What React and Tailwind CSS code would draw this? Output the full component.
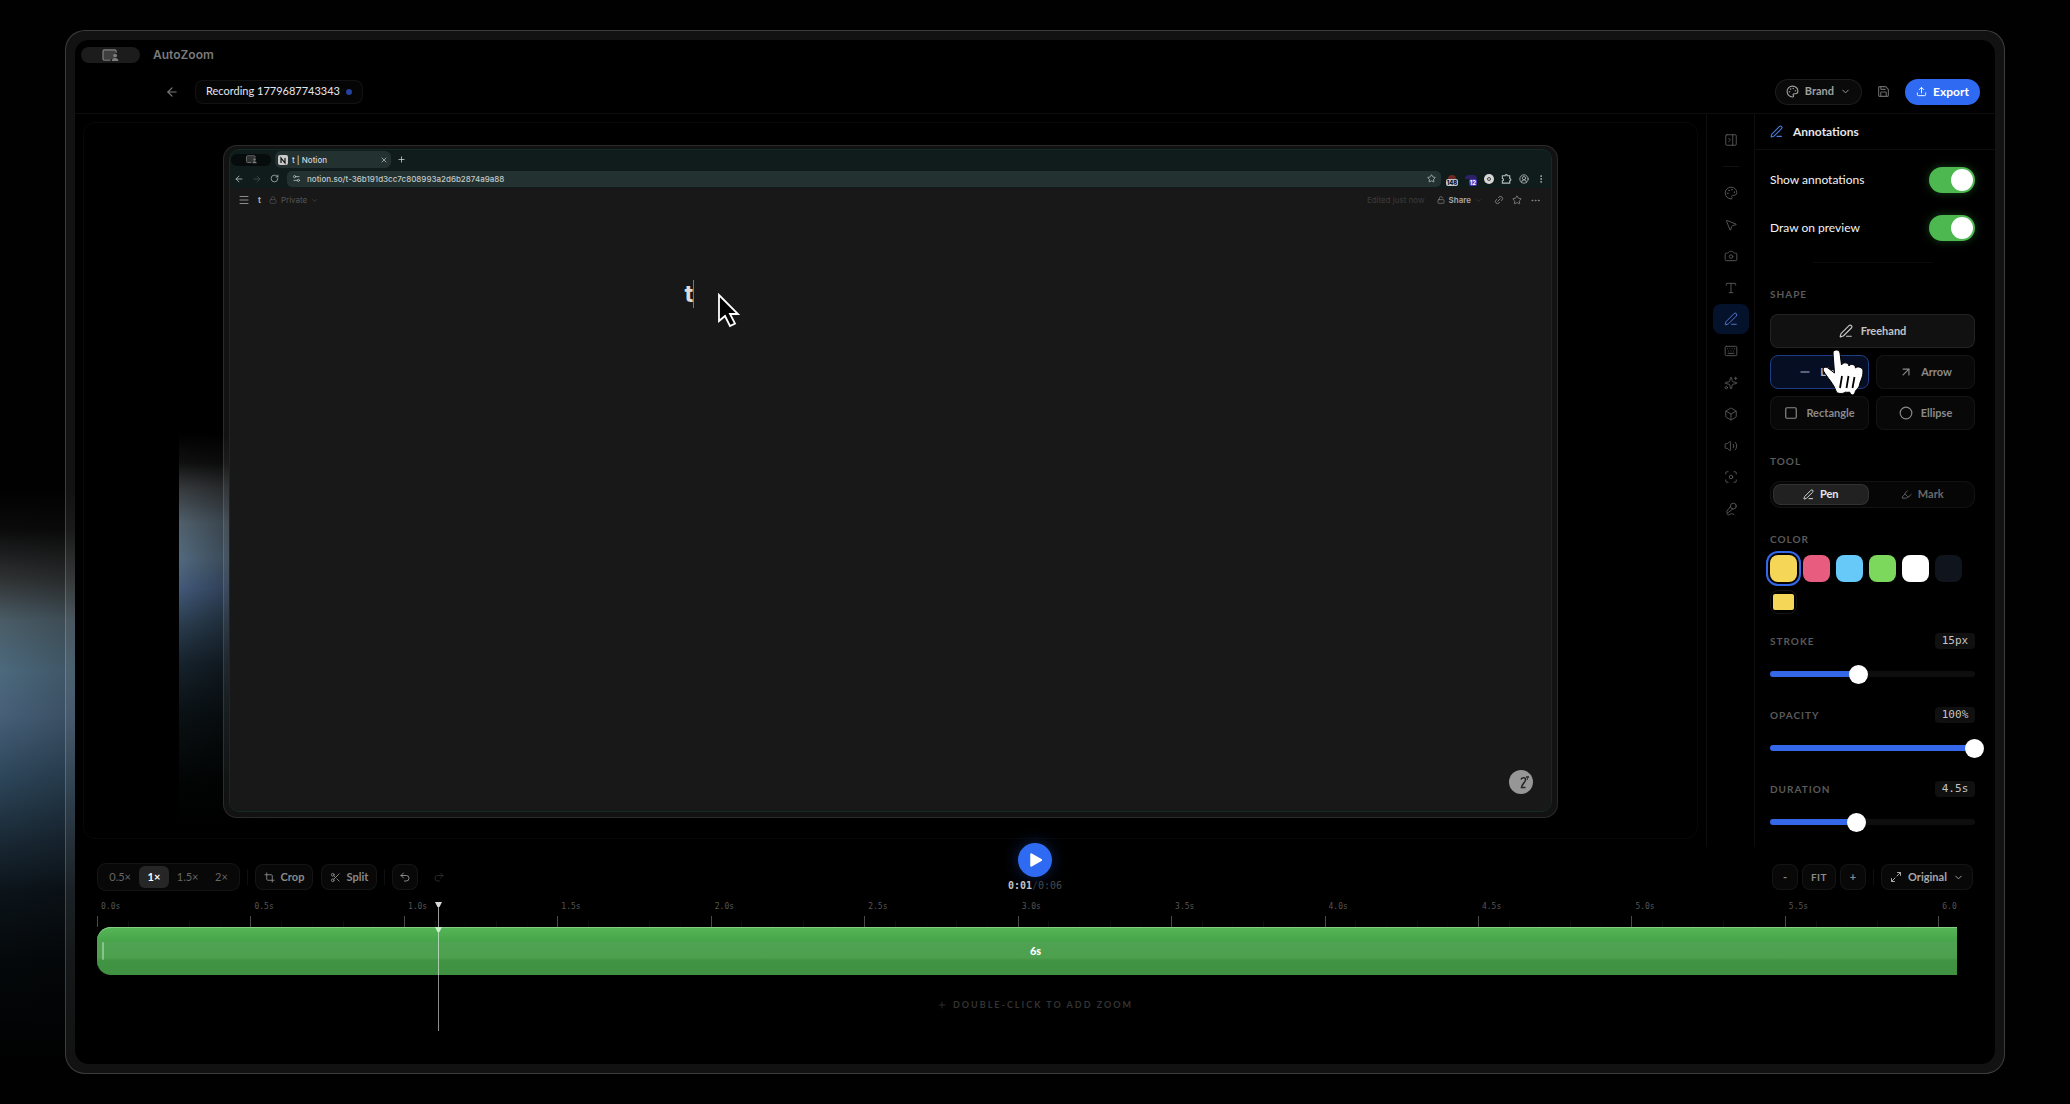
import React, { useState } from 'react';
import {
    ArrowLeft, ArrowRight, ArrowUpRight, Box, Camera, ChevronDown, Circle, CircleUserRound, Crop,
    EllipsisVertical, Ellipsis, Focus, Highlighter, Keyboard, Link2, Lock, LockOpen, Maximize2, Menu,
    MicVocal, Minus, MousePointer2, Palette, PanelRightClose, PenLine, Plus, Redo2, RotateCw,
    Save, Scissors, Settings2, Sparkles, Square, Star, Type, Undo2, Upload, Volume2, X,
} from 'lucide-react';

const railItems = [
    { id: 'style', label: 'Style', icon: Palette },
    { id: 'cursor', label: 'Cursor', icon: MousePointer2 },
    { id: 'camera', label: 'Camera', icon: Camera },
    { id: 'text', label: 'Text', icon: Type },
    { id: 'annotations', label: 'Annotations', icon: PenLine },
    { id: 'keyboard', label: 'Keyboard', icon: Keyboard },
    { id: 'effects', label: 'Effects', icon: Sparkles },
    { id: '3d', label: '3D', icon: Box },
    { id: 'audio', label: 'Audio', icon: Volume2 },
    { id: 'focus', label: 'Focus', icon: Focus },
    { id: 'voice', label: 'Voice', icon: MicVocal },
];

const colors = [
    { name: 'Yellow', className: 'bg-[#f5d657]' },
    { name: 'Pink', className: 'bg-[#e85d7f]' },
    { name: 'Blue', className: 'bg-[#66c9f7]' },
    { name: 'Green', className: 'bg-[#7bd85c]' },
    { name: 'White', className: 'bg-white' },
    { name: 'Black', className: 'bg-[#10151d]' },
];

const speeds = ['0.5×', '1×', '1.5×', '2×'];

// Half second marks, 0.0s to 6.0s
const marks = Array.from({ length: 13 }, (_, i) => (i * 0.5).toFixed(1));

const ScreenShareIcon = ({ className }) => (
    <svg viewBox="0 0 18 14" className={className} fill="none" aria-hidden="true">
        <path d="M9 12H2.5A1.5 1.5 0 0 1 1 10.500V2.500A1.500 1.500 0 0 1 2.500 1h11A1.500 1.500 0 0 1 15 2.500V4" stroke="currentColor" strokeWidth="1.5" />
        <rect x="2" y="2" width="12" height="9" fill="currentColor" opacity=".35" />
        <circle cx="14" cy="7" r="2" fill="currentColor" />
        <path d="M10.500 13c0-2.200 1.500-3.300 3.500-3.300s3.500 1.100 3.500 3.300z" fill="currentColor" />
    </svg>
);

const Toggle = ({ label, defaultChecked }) => (
    <label className="flex items-center justify-between h-12 text-[12px] text-gray-100">
        {label}
        <input
            type="checkbox"
            defaultChecked={defaultChecked}
            className="appearance-none relative w-[46px] h-[26px] rounded-full bg-[#333] checked:bg-[#4db750] shadow-[0_0_8px_#16411a] before:absolute before:top-[2px] before:right-[2px] before:w-[22px] before:h-[22px] before:rounded-full before:bg-white"
        />
    </label>
);

const SectionLabel = ({ children, id }) => (
    <h3 id={id} className="text-[10px] leading-4 font-bold tracking-[1px] text-[#5a5a5a]">{children}</h3>
);

const ShapeButton = ({ icon: Icon, children, className = 'border-white/5 bg-[#080808] text-[#8a8a8a]' }) => (
    <button className={`flex w-full items-center justify-center gap-2 h-[34px] rounded-lg border text-[11px] font-bold ${className}`}>
        <Icon size={14} strokeWidth={2} />
        {children}
    </button>
);

const SliderRow = ({ label, unit, min, max, step, initial }) => {
    const [value, setValue] = useState(initial);
    const percent = ((value - min) / (max - min)) * 100;
    const id = `slider-${label.toLowerCase()}`;

    return (
        <div>
            <div className="flex items-center justify-between">
                <label htmlFor={id} className="text-[10px] leading-4 font-bold tracking-[1px] text-[#5a5a5a]">{label}</label>
                <output className="w-10 rounded bg-[#101010] text-center font-['DejaVu_Sans_Mono',monospace] text-[11px] leading-4 text-[#c4c4c4]">
                    {value}{unit}
                </output>
            </div>
            <div className="relative mt-[22px] h-[6px] rounded-full bg-[#0e0e0e]">
                <div className="h-full rounded-full bg-[#3468e8]" style={{ width: `${percent}%` }} />
                <input
                    id={id}
                    type="range"
                    min={min}
                    max={max}
                    step={step}
                    value={value}
                    onChange={(e) => setValue(Number(e.target.value))}
                    className="absolute -top-[7px] -left-[9px] w-[calc(100%+18px)] h-5 appearance-none bg-transparent [&::-webkit-slider-thumb]:appearance-none [&::-webkit-slider-thumb]:size-[19px] [&::-webkit-slider-thumb]:rounded-full [&::-webkit-slider-thumb]:bg-white"
                />
            </div>
        </div>
    );
};

const BrowserPreview = () => (
    <div className="flex-1 flex flex-col rounded-[14px] border border-white/10 bg-white/7 p-[5px] pt-[3px]">
        <div className="flex-1 flex flex-col rounded-[10px] border border-[#132a27] bg-[#101c1c] overflow-hidden font-['Inter',sans-serif]">
            {/* Tab strip */}
            <div className="flex items-center h-[19px] gap-1">
                <div className="flex items-center justify-center w-10 h-3 rounded-full bg-black/60 ml-px">
                    <ScreenShareIcon className="w-[11px] h-[9px] text-[#7a7a7a]" />
                </div>
                <div className="flex items-center w-[116px] h-[17px] rounded-md bg-[#233130] px-[3px] text-[8px] font-medium text-gray-300">
                    <svg viewBox="0 0 10 10" className="w-[10px] h-[10px] mr-1" aria-hidden="true">
                        <rect width="10" height="10" rx="2" fill="#c9c9c9" />
                        <path d="M3 8V3l4 5V3" stroke="#161616" strokeWidth="1.200" fill="none" />
                    </svg>
                    t | Notion
                    <X size={8} className="ml-auto" />
                </div>
                <Plus size={9} className="ml-[2px] text-gray-300" />
            </div>
            {/* Toolbar */}
            <div className="flex items-center h-[19px] pl-1 pr-[5px] text-[#b4bcbb]">
                <ArrowLeft size={10} />
                <ArrowRight size={10} className="ml-2 opacity-30" />
                <RotateCw size={9} className="ml-2 mr-2" />
                <div className="flex flex-1 items-center h-4 rounded-[5px] bg-[#233130] px-[5px] text-[8px] font-medium text-[#c2c9c8]">
                    <Settings2 size={9} className="mr-[6px]" />
                    notion.so/t-36b191d3cc7c808993a2d6b2874a9a88
                    <Star size={9} className="ml-auto" />
                </div>
                <div className="flex items-center gap-[7px] ml-[5px]">
                    <span className="flex flex-col items-center w-3 pt-1 text-[6px] leading-[7px] font-bold">
                        <span className="w-2 h-1 rounded-t-full bg-[#6d2a24]" />
                        <span className="rounded-[2px] bg-[#c4c4c4] px-px text-black">148</span>
                    </span>
                    <span className="flex flex-col items-end w-3 pt-1 text-[6px] leading-[7px] font-bold">
                        <span className="w-3 h-1 rounded-t-full bg-[#2d2168]" />
                        <span className="rounded-[2px] bg-[#4b35b8] px-px text-white">12</span>
                    </span>
                    <span className="flex items-center justify-center w-[10px] h-[10px] rounded-full bg-[#d6d6d6]">
                        <span className="w-1 h-1 rounded-full border border-[#444]" />
                    </span>
                    <svg viewBox="0 0 24 24" className="w-[11px] h-[11px]" fill="none" stroke="currentColor" strokeWidth="2.500" aria-hidden="true">
                        <path d="M3 6h6a2.500 2.500 0 0 1 5 0h5v6a2.500 2.500 0 0 1 0 5v5H3v-5a2.500 2.500 0 0 0 0-5z" />
                    </svg>
                    <CircleUserRound size={10} />
                    <EllipsisVertical size={10} />
                </div>
            </div>
            {/* Page */}
            <div className="relative flex-1 flex flex-col bg-[#181818]">
                <div className="flex items-center h-6 px-2 text-[8px] text-[#555]">
                    <Menu size={12} className="text-[#8a8a8a]" />
                    <span className="ml-2 font-bold text-[#b0b0b0]">t</span>
                    <Lock size={8} className="ml-2 mr-1" />
                    Private
                    <ChevronDown size={7} className="ml-1" />
                    <div className="flex items-center ml-auto mr-[2px] text-[#8a8a8a]">
                        <span className="mr-3 text-[#3c3c3c]">Edited just now</span>
                        <LockOpen size={8} className="mr-1" />
                        <span className="font-semibold text-[#a8a8a8]">Share</span>
                        <ChevronDown size={7} className="ml-1 mr-3 text-[#444]" />
                        <Link2 size={10} className="mr-2 -rotate-45" />
                        <Star size={10} className="mr-2" />
                        <Ellipsis size={11} />
                    </div>
                </div>
                <div className="w-[412px] mx-auto pt-[68px]">
                    <h1 className="relative inline-block border-r border-[#777] text-[24px] leading-[28px] font-bold text-[#dcdcdc]">
                        t
                        <svg viewBox="0 0 24 36" className="absolute left-8 top-3 w-6 h-9" aria-hidden="true">
                            <path d="M2 3v26l6-5 5 10 5-2.500-5-9.500h8z" fill="#000" stroke="#fff" strokeWidth="1.800" />
                        </svg>
                    </h1>
                </div>
                <button aria-label="Assistant" className="absolute right-[18px] bottom-[17px] flex items-center justify-center w-6 h-6 rounded-full bg-[#969696]">
                    <svg viewBox="0 0 24 24" className="w-6 h-6" fill="none" stroke="#262626" strokeWidth="1.600" aria-hidden="true">
                        <path d="M12 9.500c1-2.500 5-2.500 4.500.500-.300 2.500-3.500 4-4 7.500h4M17 7h3M18 9h1" />
                    </svg>
                </button>
            </div>
        </div>
    </div>
);

const AnnotationsPanel = () => (
    <aside className="w-[241px] border-l border-white/5 overflow-hidden">
        <div className="flex items-center gap-[10px] h-9 px-[15px] border-b border-white/5">
            <PenLine size={13} className="text-[#4a7ddd]" />
            <h2 className="text-[12px] font-bold text-gray-200">Annotations</h2>
        </div>
        <div className="pl-[15px] pr-5 pt-[6px]">
            <Toggle label="Show annotations" defaultChecked />
            <Toggle label="Draw on preview" defaultChecked />
            <div className="mx-auto mt-[10px] w-[120px] h-px bg-white/4" />

            <div className="mt-[23px]">
                <SectionLabel>SHAPE</SectionLabel>
                <div className="grid grid-cols-2 gap-[7px] mt-3">
                    <div className="col-span-2">
                        <ShapeButton icon={PenLine} className="border-white/8 bg-[#111111] text-[#c4c4c4]">Freehand</ShapeButton>
                    </div>
                    <div className="relative">
                        <ShapeButton icon={Minus} className="border-[#1f3d85] bg-[#050e22] text-[#a9b6d6]">Line</ShapeButton>
                        {/* Hand pointer */}
                        <svg viewBox="0 0 44 50" className="absolute left-[52px] -top-[6px] w-[44px] h-[50px] z-10" aria-hidden="true">
                            <path
                                d="M11 4c0-4 6.500-4 7 0l1.500 12c1-3 7-3 7.500 1 1-2.500 6.500-2 6.500 2 1.500-2 7.500-1 7.500 3 0 7-3 10-3.500 14-.500 3-3 4-4 6-1.500 5-4 5-6 1-2 1-4-.500-5 .500-2 1.500-7.500 1.500-8.500-1.500-2-7-8.500-13-12.500-20-1.500-3 2-5 4.500-3l6.500 5z"
                                fill="#fff"
                                stroke="#000"
                                strokeWidth="1"
                            />
                            <path d="M20 27l-2 12M26.500 27l-2 12M32.500 28l-2 11" stroke="#000" strokeWidth="1.800" />
                        </svg>
                    </div>
                    <ShapeButton icon={ArrowUpRight}>Arrow</ShapeButton>
                    <ShapeButton icon={Square}>Rectangle</ShapeButton>
                    <ShapeButton icon={Circle}>Ellipse</ShapeButton>
                </div>
            </div>

            <div className="mt-[23px]">
                <SectionLabel>TOOL</SectionLabel>
                <div className="grid grid-cols-2 mt-3 h-[27px] rounded-[10px] border border-white/5 bg-[#060606] p-[2px] text-[11px] font-bold">
                    <button className="flex items-center justify-center gap-[6px] rounded-lg border border-white/8 bg-[#212121] text-gray-200 mr-1">
                        <PenLine size={11} />
                        Pen
                    </button>
                    <button className="flex items-center justify-center gap-[6px] text-[#6a6a6a]">
                        <Highlighter size={11} />
                        Mark
                    </button>
                </div>
            </div>

            <div className="mt-[23px]">
                <SectionLabel id="color-label">COLOR</SectionLabel>
                <div role="radiogroup" aria-labelledby="color-label" className="flex gap-[6px] mt-2">
                    {colors.map((color, index) => (
                        <input
                            key={color.name}
                            type="radio"
                            name="color"
                            aria-label={color.name}
                            defaultChecked={index === 0}
                            className={`appearance-none w-[27px] h-[27px] rounded-lg checked:ring-2 checked:ring-[#3468e8] checked:ring-offset-2 checked:ring-offset-black ${color.className}`}
                        />
                    ))}
                </div>
                <input
                    type="color"
                    aria-label="Custom color"
                    defaultValue="#f5d657"
                    className="block appearance-none mt-2 w-[27px] h-6 rounded-lg border border-white/8 bg-transparent px-[2px] py-[3px] [&::-webkit-color-swatch-wrapper]:p-0 [&::-webkit-color-swatch]:border-0 [&::-webkit-color-swatch]:rounded-[2px]"
                />
            </div>

            <div className="flex flex-col gap-[30px] mt-[19px]">
                <SliderRow label="STROKE" unit="px" min={2} max={32} step={1} initial={15} />
                <SliderRow label="OPACITY" unit="%" min={0} max={100} step={1} initial={100} />
                <SliderRow label="DURATION" unit="s" min={0.5} max={10} step={0.5} initial={4.5} />
            </div>
        </div>
    </aside>
);

const Timeline = () => {
    const [speed, setSpeed] = useState('1×');
    const time = 1.111;

    return (
        <section className="px-[22px] pb-[50px] -mt-1">
            <div className="grid grid-cols-3 h-12 text-[11px] font-bold text-[#8a8a8a]">
                <div className="flex items-center gap-2 pt-4">
                    <div className="flex items-center w-[143px] h-7 rounded-[9px] border border-white/5 bg-[#080808] p-[3px]">
                        {speeds.map((s) => (
                            <button
                                key={s}
                                onClick={() => setSpeed(s)}
                                className={`flex-auto h-[22px] rounded-md ${s === speed ? 'bg-[#262626] font-bold text-white' : 'font-normal text-[#666]'}`}
                            >
                                {s}
                            </button>
                        ))}
                    </div>
                    <span className="w-px h-4 -mx-px bg-white/6" />
                    <button className="flex items-center justify-center gap-[6px] w-[58px] h-[26px] rounded-lg border border-white/5 bg-[#080808]">
                        <Crop size={11} />
                        Crop
                    </button>
                    <button className="flex items-center justify-center gap-[6px] w-[56px] h-[26px] rounded-lg border border-white/5 bg-[#080808]">
                        <Scissors size={11} />
                        Split
                    </button>
                    <span className="w-px h-4 -mx-px bg-white/6" />
                    <button aria-label="Undo" className="flex items-center justify-center w-[26px] h-[26px] rounded-lg border border-white/5 bg-[#080808]">
                        <Undo2 size={12} />
                    </button>
                    <button aria-label="Redo" className="flex items-center justify-center w-[26px] h-[26px] text-[#2a2a2a]">
                        <Redo2 size={12} />
                    </button>
                </div>

                <div className="flex flex-col items-center">
                    <button aria-label="Play" className="flex items-center justify-center w-[34px] h-[34px] rounded-full bg-[#2f6bf2] shadow-[0_0_16px_#0c2152]">
                        <svg viewBox="0 0 12 14" className="w-3 h-[14px] ml-[2px]" aria-hidden="true">
                            <path d="M1 1l10.500 6L1 13z" fill="#fff" stroke="#fff" strokeWidth="1.500" strokeLinejoin="round" />
                        </svg>
                    </button>
                    <div className="flex font-['DejaVu_Sans_Mono',monospace] text-[10px] leading-[18px] font-normal">
                        <span className="font-bold text-[#c4c4c4]">0:01</span>
                        <span className="text-[#333]">/</span>
                        <span className="text-[#4a4a4a]">0:06</span>
                    </div>
                </div>

                <div className="flex items-center justify-end gap-1 pt-4">
                    <button aria-label="Zoom out" className="w-[26px] h-[26px] rounded-lg border border-white/5 bg-[#080808]">-</button>
                    <button className="w-[34px] h-[26px] rounded-lg border border-white/5 bg-[#080808] text-[10px] tracking-wider">FIT</button>
                    <button aria-label="Zoom in" className="w-[26px] h-[26px] rounded-lg border border-white/5 bg-[#080808]">+</button>
                    <span className="w-px h-4 mx-[3px] bg-white/6" />
                    <button className="flex items-center justify-center gap-[6px] w-[92px] h-[26px] rounded-lg border border-white/5 bg-[#080808] text-[#a8a8a8]">
                        <Maximize2 size={12} />
                        Original
                        <ChevronDown size={11} />
                    </button>
                </div>
            </div>

            <div className="relative mr-4">
                <div className="flex h-9 overflow-hidden">
                    {marks.map((mark) => (
                        <div key={mark} className="flex flex-col justify-between shrink-0 w-[8.25%]">
                            <span className="pt-2 pl-1 font-['DejaVu_Sans_Mono',monospace] text-[8px] leading-4 text-[#555]">{mark}s</span>
                            <div className="grid grid-cols-5 items-end">
                                <span className="h-[11px] border-l border-[#4a4a4a]" />
                                <span className="h-[6px] border-l border-white/6" />
                                <span className="h-[6px] border-l border-white/2" />
                                <span className="h-[6px] border-l border-white/6" />
                                <span className="h-[6px] border-l border-white/2" />
                            </div>
                        </div>
                    ))}
                </div>

                <div className="overflow-hidden">
                    <div className="flex items-center w-[calc(100%+15px)] h-12 px-[5px] rounded-[14px] bg-[linear-gradient(to_bottom,#55b658_0%,#48a64a_28%,#4fa251_34%,#4ca04e_64%,#419443_69%,#3f9141_100%)] shadow-[inset_0_1px_0_#83cd85]">
                        <span className="w-[2px] h-[18px] rounded-full bg-white/35" />
                        <span className="flex-1 text-center text-[11px] font-black text-white">6s</span>
                    </div>
                </div>

                {/* Playhead */}
                <div
                    className="absolute top-[11px] flex flex-col items-center w-[7px] h-[129px] -ml-[3px]"
                    style={{ left: `${(time / 0.5) * 8.25}%` }}
                >
                    <svg viewBox="0 0 7 5" className="w-[7px] h-[5px]" aria-hidden="true">
                        <path d="M0 0h7L4.500 5h-2z" fill="#d8d8d8" />
                    </svg>
                    <span className="w-px h-5 bg-white/60" />
                    <svg viewBox="0 0 7 5" className="w-[7px] h-[5px]" aria-hidden="true">
                        <path d="M0 0h7L4.500 5h-2z" fill="#c8f0c8" />
                    </svg>
                    <span className="w-px flex-1 bg-white/55" />
                </div>
            </div>

            <p className="flex items-center justify-center gap-[6px] mt-[21px] text-[9px] leading-[18px] font-bold tracking-[2px] text-[#333]">
                <Plus size={10} />
                DOUBLE-CLICK TO ADD ZOOM
            </p>
        </section>
    );
};

const App = () => {
    return (
        <div className="flex min-h-screen px-[65px] py-[30px] bg-[linear-gradient(to_right,rgba(1,1,1,0),rgba(1,1,1,0.4)_150px,#010101_320px),linear-gradient(to_bottom,#010101_490px,#0b0b0b_530px,#303334_580px,#4a5c66_620px,#4c697d_670px,#476079_715px,#2c4559_780px,#1b2b38_835px,#0c141a_890px,#04080a_960px,#010101_1060px)] font-['Lato',sans-serif]">
            <div className="flex-1 flex flex-col rounded-[20px] border border-white/18 bg-white/7 p-[9px]">
                <div className="flex-1 flex flex-col rounded-[14px] bg-black overflow-hidden">
                    {/* Title bar */}
                    <div className="flex items-center gap-[13px] h-[30px] px-[6px]">
                        <div className="flex items-center justify-center w-[59px] h-4 rounded-full bg-[#1c1c1c]">
                            <ScreenShareIcon className="w-[17px] h-[13px] text-[#7d7d7d]" />
                        </div>
                        <span className="font-['Inter',sans-serif] text-[12px] font-semibold text-[#7a7a7a]">AutoZoom</span>
                    </div>

                    {/* Header */}
                    <header className="flex items-center h-11 pl-[90px] pr-[15px] border-b border-white/5 text-[11px]">
                        <button aria-label="Back" className="text-[#7a7a7a]">
                            <ArrowLeft size={14} />
                        </button>
                        <button className="flex items-center gap-[6px] h-6 ml-[16px] px-[10px] rounded-lg border border-white/5 bg-[#050505] text-gray-200">
                            Recording 1779687743343
                            <span className="w-[6px] h-[6px] rounded-full bg-[#23439c]" />
                        </button>
                        <button className="flex items-center gap-[6px] h-[26px] ml-auto px-[10px] rounded-full border border-white/8 bg-[#0a0a0a] font-bold text-[#a0a0a0]">
                            <Palette size={13} />
                            Brand
                            <ChevronDown size={11} />
                        </button>
                        <button aria-label="Save" className="mx-[15px] text-[#6a6a6a]">
                            <Save size={13} />
                        </button>
                        <button className="flex items-center justify-center gap-[6px] w-[75px] h-[26px] rounded-full bg-[#2f6bf2] text-[12px] font-bold text-white">
                            <Upload size={11} />
                            Export
                        </button>
                    </header>

                    <div className="flex-1 flex">
                        {/* Canvas */}
                        <main className="flex-1 flex p-2">
                            <div className="flex-1 flex rounded-xl border border-white/3 px-[95px]">
                                <div className="flex-1 flex px-11 pt-[22px] pb-5 bg-[linear-gradient(to_right,rgba(0,0,0,0),rgba(0,0,0,0.25)_40px,#000_130px),linear-gradient(to_bottom,#000_310px,#101010_340px,#36393c_365px,#50606c_400px,#52697d_435px,#43597a_465px,#2a3e50_500px,#16222c_540px,#0a1114_590px,#020404_660px,#000_700px)]">
                                    <BrowserPreview />
                                </div>
                            </div>
                        </main>

                        {/* Tool rail */}
                        <nav className="flex flex-col items-center w-12 pt-[10px] border-l border-white/5 text-[#5e5e5e]">
                            <button aria-label="Collapse panel" className="flex items-center justify-center w-9 h-8">
                                <PanelRightClose size={14} strokeWidth={1.5} />
                            </button>
                            <span className="w-4 h-px mt-[10px] mb-[11px] bg-white/7" />
                            <div className="flex flex-col justify-between h-[346px]">
                                {railItems.map((item) => (
                                    <button
                                        key={item.id}
                                        aria-label={item.label}
                                        className={`flex items-center justify-center w-9 h-[30px] rounded-lg ${
                                            item.id === 'annotations' ? 'bg-[#05122b] text-[#5b83e0]' : ''
                                        }`}
                                    >
                                        <item.icon size={14} strokeWidth={1.5} />
                                    </button>
                                ))}
                            </div>
                        </nav>

                        <AnnotationsPanel />
                    </div>

                    <Timeline />
                </div>
            </div>
        </div>
    );
};

export default App;
